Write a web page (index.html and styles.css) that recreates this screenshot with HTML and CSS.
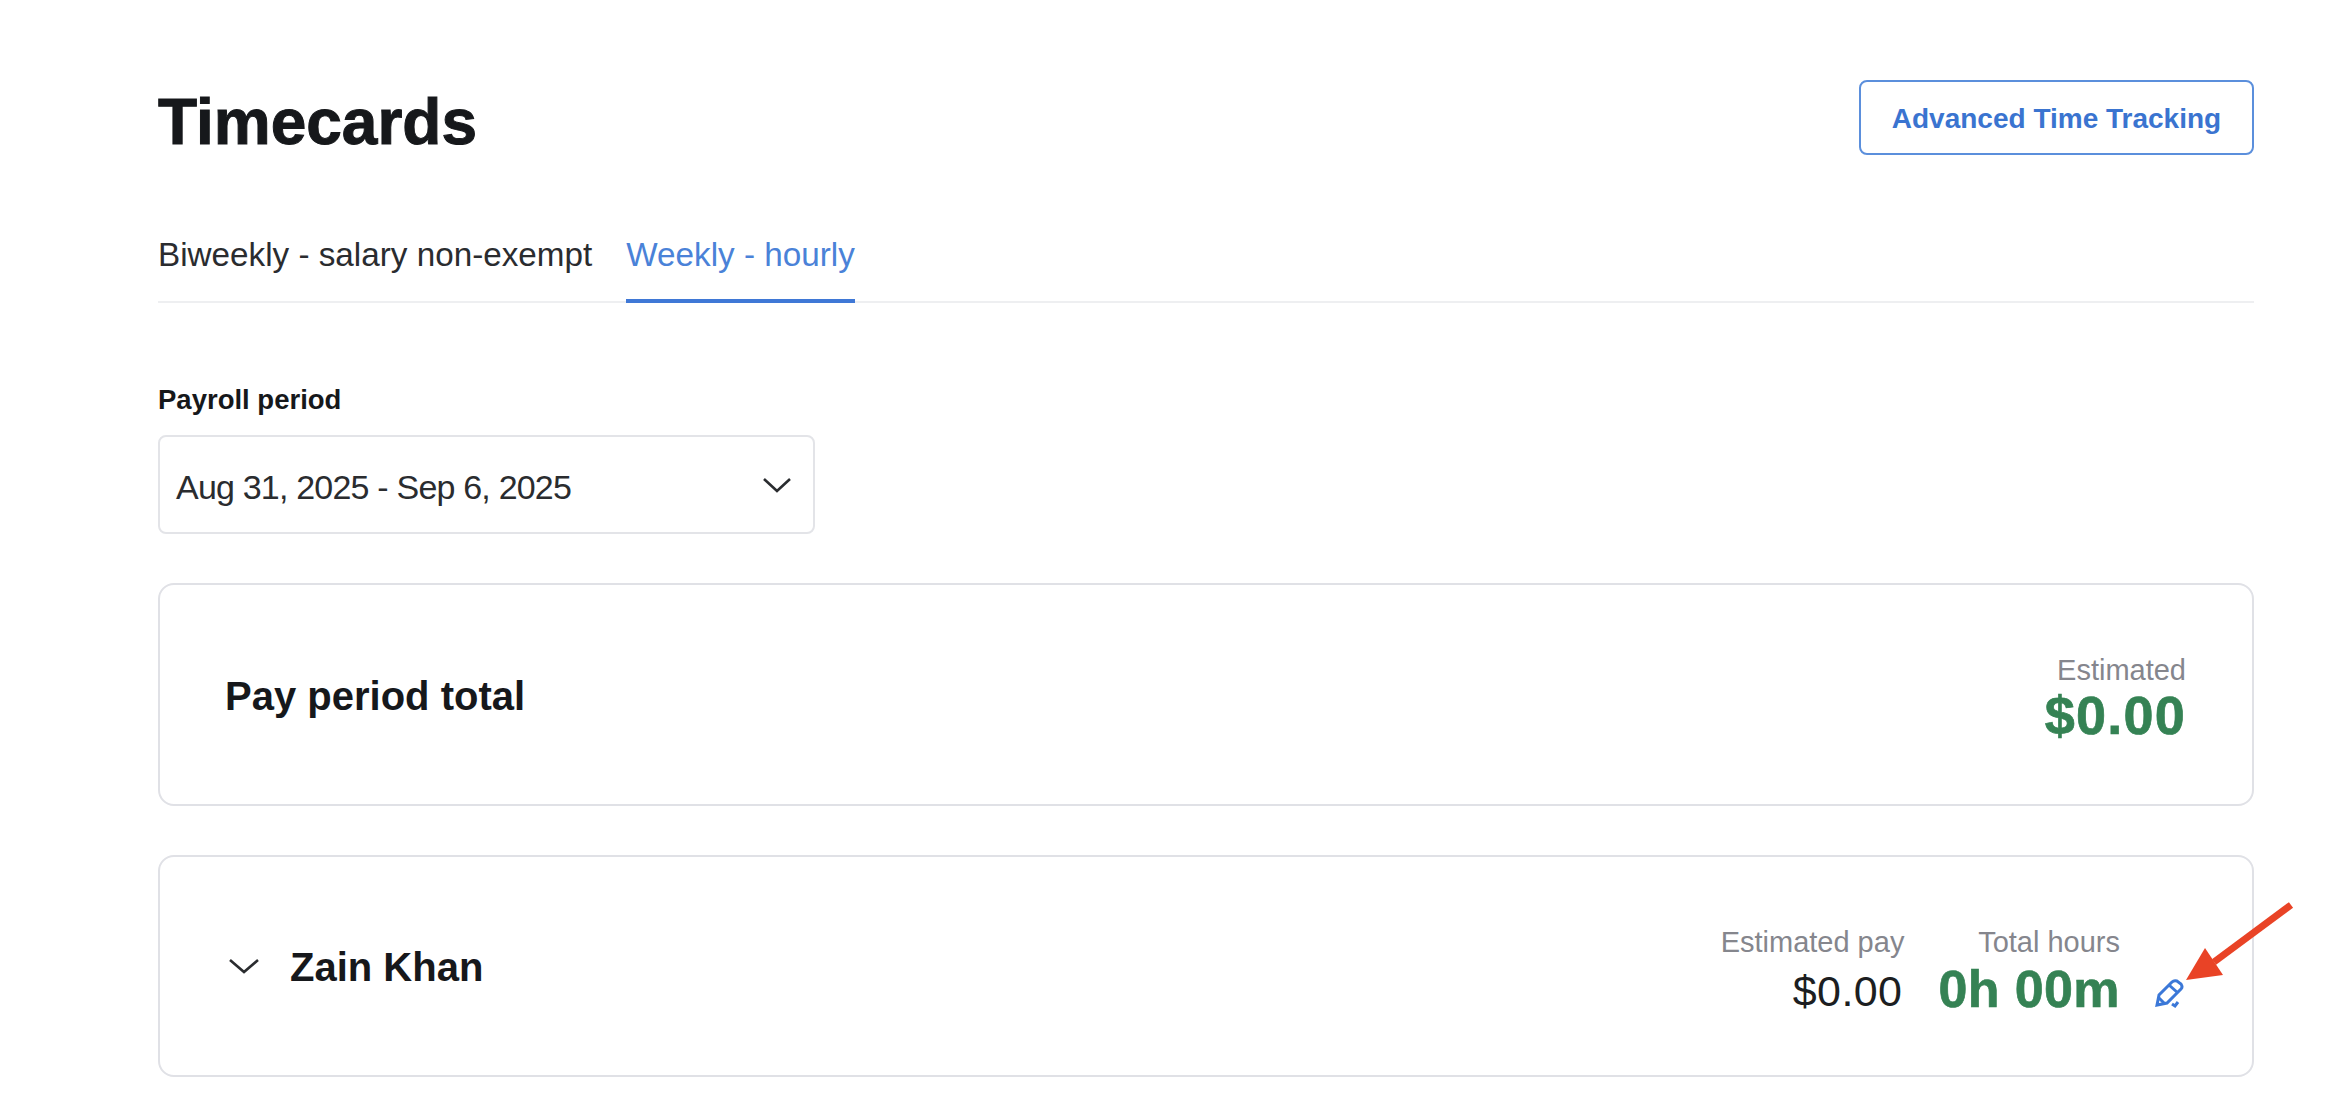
FILE: index.html
```html
<!DOCTYPE html>
<html lang="en">
<head>
    <meta charset="UTF-8">
    <title>Timecards</title>
    <link rel="stylesheet" href="styles.css">
</head>
<body>
    <div class="page">
        <div class="header">
            <h1>Timecards</h1>
            <button class="outline-btn">Advanced Time Tracking</button>
        </div>

        <div class="tabs">
            <div class="tab">Biweekly - salary non-exempt</div>
            <div class="tab active">Weekly - hourly</div>
        </div>

        <div class="field-label">Payroll period</div>
        <div class="select">
            <span class="select-text">Aug 31, 2025 - Sep 6, 2025</span>
            <svg class="chevron" width="30" height="18" viewBox="0 0 30 18"><path d="M2 3 L15 15 L28 3"/></svg>
        </div>

        <!-- Pay period total -->
        <div class="card">
            <div class="card-title">Pay period total</div>
            <div class="stat stat-total">
                <div class="stat-label">Estimated</div>
                <div class="stat-big">$0.00</div>
            </div>
        </div>

        <!-- Employee row -->
        <div class="card card-employee">
            <div class="employee">
                <svg class="chevron" width="32" height="18" viewBox="0 0 32 18"><path d="M2 3 L16 15 L30 3"/></svg>
                <div class="card-title">Zain Khan</div>
            </div>
            <div class="employee-stats">
                <div class="stat">
                    <div class="stat-label">Estimated pay</div>
                    <div class="stat-pay">$0.00</div>
                </div>
                <div class="stat">
                    <div class="stat-label">Total hours</div>
                    <div class="stat-hours">0h 00m</div>
                </div>
                <svg class="pencil" width="32" height="30" viewBox="0 0 32 30">
                    <path d="M3 26 L5 16 L18 3 Q20 1 23 2 L27 5 Q29 8 27 10 L13 24 Z"/>
                    <path d="M15 6 L24 14"/>
                    <path d="M4 18 L11 25"/>
                    <path d="M18 25 L21 27 L24 23"/>
                </svg>
            </div>
        </div>
    </div>

    <!-- red annotation arrow -->
    <svg class="arrow" width="120" height="90" viewBox="0 0 120 90">
        <path class="arrow-line" d="M113 5 L36 62"/>
        <path class="arrow-head" d="M8 80 L27 48 L45 75 Z"/>
    </svg>
</body>
</html>
```

FILE: styles.css
```css
body { font-family: "Liberation Sans", Arial, sans-serif; background-color: #fff; color: #16181b; margin: 0; padding: 0; }
.page { padding: 80px 78px 0 158px; }
.header { display: flex; justify-content: space-between; align-items: center; height: 75px; }
h1 { font-size: 64px; line-height: 1; font-weight: 700; margin: 8px 0 0; -webkit-text-stroke: 1px #16181b; }
.outline-btn { width: 395px; height: 75px; background: #fff; border: 2px solid #5b8fdc; border-radius: 8px; color: #3a74d0; font-family: inherit; font-size: 28px; font-weight: 700; padding: 2px 0 0; }
.tabs { display: flex; gap: 34px; margin-top: 65px; border-bottom: 2px solid #eeeff1; height: 81px; }
.tab { font-size: 33.25px; line-height: 70px; height: 81px; color: #2a2c2f; }
.tab.active { color: #4a82d8; border-bottom: 4px solid #3f78d6; box-sizing: border-box; height: 83px; }
.field-label { font-size: 27.5px; font-weight: 700; margin-top: 82px; line-height: 30px; }
.select { display: flex; justify-content: space-between; align-items: center; box-sizing: border-box; width: 657px; height: 99px; margin-top: 20px; padding: 0 21px 0 16px; border: 2px solid #e3e4e8; border-radius: 8px; font-size: 34px; letter-spacing: -0.8px; color: #2a2c2f; }
.select-text { margin-top: 5px; }
.chevron { fill: none; stroke: #2a2c2f; stroke-width: 2.6; }
.card { display: flex; justify-content: space-between; align-items: center; box-sizing: border-box; height: 223px; margin-top: 49px; padding: 0 66px 0 65px; border: 2px solid #e0e1e6; border-radius: 16px; }
.card-employee { height: 222px; padding-left: 68px; }
.card-title { font-size: 40px; font-weight: 700; margin-top: 3px; }
.employee { display: flex; align-items: center; gap: 30px; }
.employee-stats { display: flex; align-items: flex-end; gap: 34px; margin-top: 12px; }
.stat { text-align: right; }
.stat-total { margin-top: 6px; }
.stat-label { font-size: 29px; color: #85868d; line-height: 34px; }
.stat-big { font-size: 54px; font-weight: 700; color: #358254; line-height: 56px; letter-spacing: 1.2px; -webkit-text-stroke: 0.7px #358254; }
.stat-pay { font-size: 43px; color: #1c1e21; height: 60px; line-height: 64px; margin-right: 2px; letter-spacing: 0.4px; }
.stat-hours { font-size: 52px; font-weight: 700; color: #358254; height: 60px; line-height: 60px; letter-spacing: 0.4px; -webkit-text-stroke: 0.7px #358254; }
.pencil { fill: none; stroke: #3b78d8; stroke-width: 3; margin-bottom: 10px; }
.arrow { position: absolute; left: 2178px; top: 900px; }
.arrow-line { fill: none; stroke: #e94326; stroke-width: 7; }
.arrow-head { fill: #e94326; }
```
